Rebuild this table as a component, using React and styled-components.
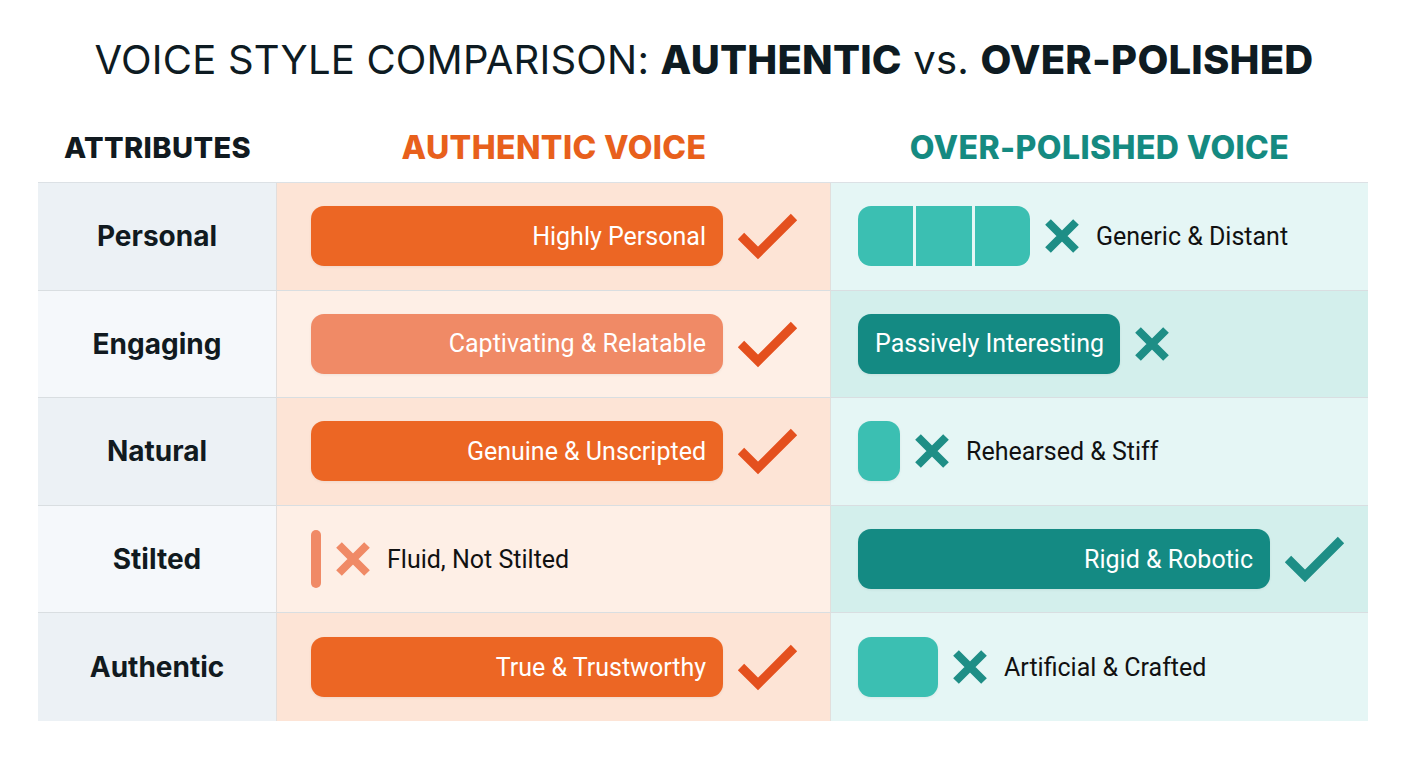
import styled, { createGlobalStyle } from 'styled-components'

const GlobalStyle = createGlobalStyle`
  html, body {
    margin: 0;
    padding: 0;
    background: #FFFFFF;
  }
  body {
    font-family: Inter, "Noto Sans", sans-serif;
  }
`

const ORANGE = '#EC6624'
const ORANGE_LIGHT = '#F08A66'
const CHECK_ORANGE = '#E4501E'
const TEAL = '#3BBFB2'
const TEAL_DARK = '#148A83'
const TEAL_MARK = '#1E8E86'

const Page = styled.div`
  width: 1408px;
  height: 768px;
  padding-top: 35px;
  box-sizing: border-box;
`
const Title = styled.h1`
  margin: 0;
  text-align: center;
  font: 400 40px Inter, sans-serif;
  letter-spacing: 0.2px;
  color: #0E1B22;
  b {
    font-weight: 800;
  }
`
const Table = styled.div`
  width: 1330px;
  margin: 35px 0 0 38px;
  display: grid;
  grid-template-columns: 239px 554px 537px;
`
const HeadCell = styled.div`
  height: 64px;
  display: flex;
  align-items: center;
  justify-content: center;
  font: 800 ${p => p.$size || 28}px Inter, sans-serif;
  letter-spacing: 0.4px;
  color: ${p => p.$color};
  padding-bottom: 6px;
  box-sizing: border-box;
  border-bottom: 1px solid #DCE1E5;
`
const Cell = styled.div`
  height: 107.6px;
  box-sizing: border-box;
  border-bottom: ${p => (p.$last ? 'none' : '1px solid #D9DEE1')};
  border-right: ${p => (p.$edge ? '1px solid #E2DEDC' : 'none')};
  background: ${p => p.$bg};
  display: flex;
  align-items: center;
  gap: 14px;
  padding-left: ${p => p.$pad || 0}px;
`
const Label = styled(Cell)`
  justify-content: center;
  padding-left: 0;
  font: 700 28px Inter, sans-serif;
  color: #111A20;
`
const Bar = styled.div`
  width: ${p => p.$w}px;
  height: 60px;
  border-radius: 13px;
  background: ${p => p.$color};
  display: flex;
  align-items: center;
  justify-content: ${p => (p.$left ? 'flex-start' : 'flex-end')};
  padding: 0 17px;
  box-sizing: border-box;
  font: 400 25px Roboto, sans-serif;
  white-space: nowrap;
  color: #FFFFFF;
  box-shadow: 0 1px 3px rgba(0, 0, 0, 0.06);
  flex-shrink: 0;
`
const Segments = styled.div`
  display: flex;
  gap: 3px;
  width: 172px;
  height: 60px;
  border-radius: 13px;
  overflow: hidden;
  flex-shrink: 0;
`
const Segment = styled.div`
  flex: 1;
  background: ${TEAL};
`
const Pill = styled.div`
  width: 10px;
  height: 58px;
  border-radius: 5px;
  background: ${ORANGE_LIGHT};
  flex-shrink: 0;
`
const Note = styled.span`
  font: 400 25px Roboto, sans-serif;
  white-space: nowrap;
  color: #111111;
  margin-left: 2px;
`

const Check = ({ color }) => (
  <svg width="62" height="52" viewBox="0 0 62 52">
    <polyline points="4,26 21,43 57,7" fill="none" stroke={color} strokeWidth="9" strokeLinejoin="miter" />
  </svg>
)

const Cross = ({ color }) => (
  <svg width="36" height="36" viewBox="0 0 36 36">
    <path d="M4 4 L32 32 M32 4 L4 32" stroke={color} strokeWidth="8" />
  </svg>
)

const rows = [
  {
    label: 'Personal',
    authentic: <><Bar $w={412} $color={ORANGE}>Highly Personal</Bar><Check color={CHECK_ORANGE} /></>,
    polished: <><Segments><Segment /><Segment /><Segment /></Segments><Cross color={TEAL_MARK} /><Note>Generic &amp; Distant</Note></>
  },
  {
    label: 'Engaging',
    authentic: <><Bar $w={412} $color={ORANGE_LIGHT}>Captivating &amp; Relatable</Bar><Check color={CHECK_ORANGE} /></>,
    polished: <><Bar $w={262} $color={TEAL_DARK} $left>Passively Interesting</Bar><Cross color={TEAL_MARK} /></>
  },
  {
    label: 'Natural',
    authentic: <><Bar $w={412} $color={ORANGE}>Genuine &amp; Unscripted</Bar><Check color={CHECK_ORANGE} /></>,
    polished: <><Bar $w={42} $color={TEAL} /><Cross color={TEAL_MARK} /><Note>Rehearsed &amp; Stiff</Note></>
  },
  {
    label: 'Stilted',
    authentic: <><Pill /><Cross color={ORANGE_LIGHT} /><Note>Fluid, Not Stilted</Note></>,
    polished: <><Bar $w={412} $color={TEAL_DARK}>Rigid &amp; Robotic</Bar><Check color={TEAL_MARK} /></>
  },
  {
    label: 'Authentic',
    authentic: <><Bar $w={412} $color={ORANGE}>True &amp; Trustworthy</Bar><Check color={CHECK_ORANGE} /></>,
    polished: <><Bar $w={80} $color={TEAL} /><Cross color={TEAL_MARK} /><Note>Artificial &amp; Crafted</Note></>
  }
]

const attrBg = ['#ECF1F5', '#F5F8FB']
const authBg = ['#FDE4D6', '#FEEFE6']
const polBg = ['#E5F6F5', '#D3EFEC']

const App = () => (
  <Page>
    <GlobalStyle />
    <Title>
      VOICE STYLE COMPARISON: <b>AUTHENTIC</b> vs. <b>OVER-POLISHED</b>
    </Title>
    <Table>
      <HeadCell $color="#111A20" $size={29}>ATTRIBUTES</HeadCell>
      <HeadCell $color="#E8601C" $size={32}>AUTHENTIC VOICE</HeadCell>
      <HeadCell $color="#158A81" $size={32}>OVER-POLISHED VOICE</HeadCell>
      {rows.map((r, i) => {
        const last = i === rows.length - 1
        return [
          <Label key={r.label + 'l'} $bg={attrBg[i % 2]} $last={last} $edge>{r.label}</Label>,
          <Cell key={r.label + 'a'} $bg={authBg[i % 2]} $last={last} $pad={34} $edge>{r.authentic}</Cell>,
          <Cell key={r.label + 'p'} $bg={polBg[i % 2]} $last={last} $pad={27}>{r.polished}</Cell>
        ]
      })}
    </Table>
  </Page>
)

export default App
